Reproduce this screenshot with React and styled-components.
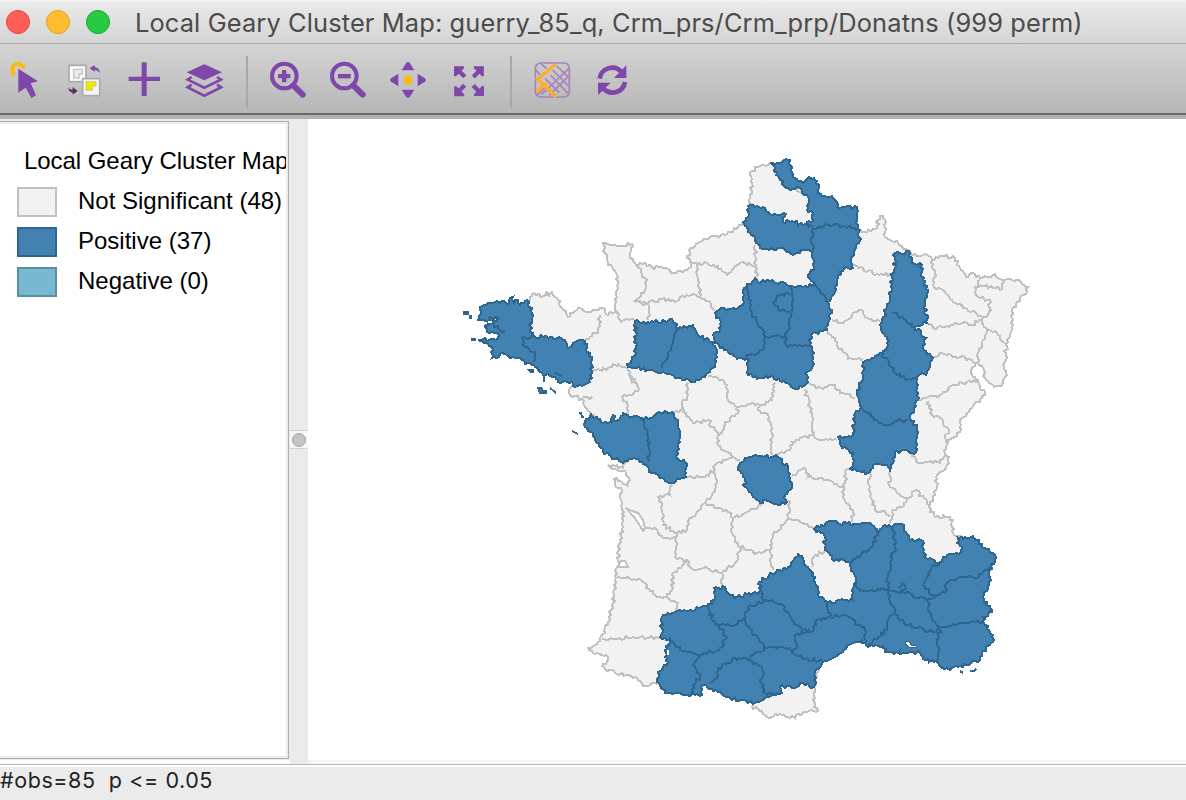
import React from "react";
import styled, { createGlobalStyle } from "styled-components";

const GlobalStyle = createGlobalStyle`
  * { box-sizing: border-box; }
  html, body { margin: 0; padding: 0; overflow: hidden; }
`;

const Window = styled.div`
  width: 1186px;
  height: 800px;
  display: flex;
  flex-direction: column;
  background: #ebebeb;
  overflow: hidden;
`;

const TitleBar = styled.header`
  height: 44px;
  flex: none;
  display: flex;
  align-items: center;
  padding-left: 6px;
  background: linear-gradient(#f4f4f4, #e9e9e9 3px, #d4d4d4);
  border-bottom: 1px solid #a9a9a9;
`;

const Lights = styled.div`
  display: flex;
  gap: 16px;
`;

const Light = styled.span`
  width: 24px;
  height: 24px;
  border-radius: 50%;
  background: ${(p) => p.$fill};
  border: 1px solid ${(p) => p.$edge};
`;

const Title = styled.h1`
  margin: 0 0 0 25px;
  padding-top: 2px;
  font: 400 25.4px/40px Inter, sans-serif;
  letter-spacing: 0.13px;
  color: #4b4b4b;
  white-space: pre;
`;

const Toolbar = styled.nav`
  height: 75px;
  flex: none;
  display: flex;
  align-items: flex-start;
  gap: 24px;
  padding: 18px 0 0 6px;
  background: linear-gradient(#d4d4d4, #b6b6b6 69px, #666966 69px, #666966 71px, #b1b1b1 71px);
`;

const IconButton = styled.button`
  width: 36px;
  height: 36px;
  flex: none;
  padding: 0;
  border: 0;
  background: none;
  svg { display: block; overflow: visible; }
`;

const Separator = styled.span`
  width: 2px;
  height: 52px;
  flex: none;
  margin: -6px -2px 0 0;
  background: #a8a8a8;
`;

const Body = styled.main`
  height: 645px;
  flex: none;
  display: flex;
`;

const LegendPane = styled.aside`
  width: 290px;
  flex: none;
  padding: 2px 1px 4px 0;
  background: linear-gradient(#ebebeb 641px, #fff 641px);
`;

const Legend = styled.section`
  height: 638px;
  padding: 19px 0 0 17px;
  background: #fff;
  border: solid #b0b0b0;
  border-width: 1px 1px 1px 0;
  box-shadow: inset -2px 2px #ececec, inset 0 -2px #ececec;
  overflow: hidden;
  font: 400 24px/40px "Liberation Sans", Arial, sans-serif;
  color: #000;
`;

const LegendTitle = styled.div`
  width: 262px;
  margin-left: 7px;
  height: 40px;
  overflow: hidden;
  white-space: nowrap;
  letter-spacing: -0.05px;
`;

const LegendRow = styled.div`
  display: flex;
  align-items: center;
  gap: 21px;
  height: 40px;
  white-space: nowrap;
`;

const Swatch = styled.span`
  width: 40px;
  height: 30px;
  margin-top: 1px;
  background: ${(p) => p.$fill};
  border: 2px solid ${(p) => p.$edge};
`;

const Sash = styled.div`
  width: 18px;
  flex: none;
  display: flex;
  align-items: center;
  padding-bottom: 4px;
  background: #ebebeb;
`;

const Grip = styled.div`
  width: 18px;
  height: 19px;
  display: grid;
  place-items: center;
  background: #f7f7f7;
  border: solid #d2d2d2;
  border-width: 1px 0;
  &::before {
    content: "";
    width: 12px;
    height: 12px;
    border-radius: 50%;
    background: #c4c4c4;
    border: 1px solid #a2a2a2;
  }
`;

const MapPane = styled.section`
  flex: 1;
  background: #fff;
  border-bottom: 4px solid #f4f4f4;
  overflow: hidden;
  svg { display: block; }
`;

const StatusBar = styled.footer`
  flex: 1;
  background: #ebebeb;
  border-top: 1px solid #b5b5b5;
  box-shadow: inset 0 2px #fff;
  font: 400 21.5px/30px Inter, sans-serif;
  letter-spacing: 0.57px;
  color: #222;
  white-space: pre;
`;

const PURPLE = "#7f47a9";
const YELLOW = "#fbb917";

const Icon = ({ label, children }) => (
  <IconButton aria-label={label}>
    <svg width="36" height="36" viewBox="0 0 108 108" fill={PURPLE}>{children}</svg>
  </IconButton>
);

const Lens = () => (
  <g fill="none" stroke={PURPLE}>
    <circle cx="43" cy="42" r="37" strokeWidth="12" />
    <path d="M70 70L98 98" strokeWidth="18" strokeLinecap="round" />
  </g>
);

const SelectIcon = () => (
  <Icon label="Select">
    <path d="M27 39A18 18 0 1 1 54 20" fill="none" stroke={YELLOW} strokeWidth="12" />
    <path d="M37 20L96 58L74 64L90 100L76 108L59 77L37 92Z" />
  </Icon>
);
const InvertIcon = () => (
  <Icon label="Invert selection">
    <rect x="9" y="10" width="51" height="49" fill="#fafafa" stroke="#aaa" strokeWidth="5" />
    <path d="M23 22H49V36H39V48H23Z" fill="#ececec" stroke="#c2c2c2" strokeWidth="4" />
    <rect x="50" y="50" width="51" height="51" fill="#f5f5f5" stroke="#aaa" strokeWidth="5" />
    <path d="M60 59H90V72H79V85H60Z" fill="#f3e900" stroke="#bdb76b" strokeWidth="2" />
    <path d="M71 19L86 9V15Q101 18 102 33Q95 24 86 23V29Z" />
    <path d="M35 87L20 75V83Q9 84 6 76Q8 91 20 92V98Z" fill="#56305f" />
  </Icon>
);
const AddIcon = () => (
  <Icon label="Add layer">
    <path d="M47 1H62V44H102V57H62V102H47V57H8V44H47Z" />
  </Icon>
);
const LayersIcon = () => (
  <Icon label="Layers">
    <path d="M55 7L108 31L55 55L2 31Z" />
    <path d="M17 45L5 53L55 77L105 53L93 45M17 68L5 76L55 101L105 76L93 68" fill="none" stroke={PURPLE} strokeWidth="8" />
  </Icon>
);
const ZoomInIcon = () => (
  <Icon label="Zoom in">
    <Lens />
    <path d="M36 24H49V36H61V49H49V61H36V49H24V36H36Z" />
  </Icon>
);
const ZoomOutIcon = () => (
  <Icon label="Zoom out">
    <Lens />
    <rect x="24" y="36" width="38" height="13" />
  </Icon>
);
const PanIcon = () => (
  <Icon label="Pan">
    <circle cx="54" cy="54" r="13" fill="#fbbc05" />
    {[0, 90, 180, 270].map((a) => (
      <path key={a} d="M50 1H58L73 25H35Z" transform={`rotate(${a} 54 54)`} />
    ))}
  </Icon>
);
const ExtentIcon = () => (
  <Icon label="Full extent">
    {[0, 90, 180, 270].map((a) => (
      <path key={a} d="M12 13H42V19L35 26L49 40L40 49L26 35L18 43H12Z" transform={`rotate(${a} 57 57.5)`} />
    ))}
  </Icon>
);
const BasemapIcon = () => (
  <Icon label="Base map">
    <g fill="none" stroke="#a682bd" strokeWidth="5">
      <rect x="4" y="3" width="102" height="102" rx="16" />
      <path d="M20 4L38 20M56 24L104 72M68 12L104 46M104 20L62 60L22 98M104 42L46 100M50 40L102 94M34 50L76 92M4 22L18 38M10 98L36 74" />
    </g>
    <path d="M66 6L10 52L66 104M8 90L38 62" fill="none" stroke="#fdae2c" strokeWidth="10" />
  </Icon>
);
const RefreshIcon = () => (
  <Icon label="Refresh">
    <path d="M17 50A38 38 0 0 1 82 29M93 60A38 38 0 0 1 28 80" fill="none" stroke={PURPLE} strokeWidth="14" />
    <path d="M97 10V48H60ZM12 99V62H50Z" />
  </Icon>
);

// Coastline and land border, in window coordinates.
const LAND =
  "770,163 780,172 800,192 815,185 825,205 850,215 855,232 860,230 867,232 877,228 878,220 883,216 885,220 885,237 892,241 898,243 906,249 912,255 917,256 925,254 932,259 942,256 955,258 960,268 966,277 973,273 980,278 987,277 995,274 1000,279 1017,280 1028,287 1023,295 1012,309 1012,327 1007,340 1006,353 1004,367 1007,375 1003,383 994,387 985,378 983,368 975,363 973,367 973,377 978,380 980,388 985,392 982,398 962,418 961,430 948,443 945,453 949,457 947,465 937,475 936,490 929,507 935,517 942,518 943,514 953,520 953,533 958,536 975,545 985,560 980,580 983,608 985,640 970,658 950,658 920,648 870,636 840,648 818,667 814,687 814,707 818,711 807,712 790,718 780,714 767,717 762,711 752,707 752,700 740,692 700,682 672,686 660,682 648,686 643,686 635,677 617,674 610,670 605,669 602,666 607,662 606,655 595,654 588,648 597,644 605,633 609,617 613,603 614,590 616,578 617,567 620,540 622,525 624,512 622,504 620,498 622,490 615,485 614,479 622,482 628,487 629,478 625,471 617,470 608,465 623,468 625,463 632,455 605,440 600,422 590,412 583,403 582,399 570,395 570,388 578,385 580,370 545,350 510,340 500,320 520,308 529,302 530,297 532,294 543,296 546,292 549,297 552,291 555,297 557,298 562,308 568,317 578,308 588,312 593,310 603,308 606,314 617,312 615,307 617,297 618,288 616,273 608,262 605,253 603,243 617,246 632,244 630,255 635,263 638,268 640,263 652,267 663,268 674,273 685,270 693,263 687,258 691,248 710,237 727,234 738,227 743,222 755,215 749,200 752,193 750,172 760,166 770,163";

const LAND_BORDERS = [
  "693,263 697,265 698,278 700,297 710,302 714,311",
  "697,265 705,262 718,266 727,275 738,265 745,263 755,267",
  "755,245 756,267 757,277",
  "635,302 648,303 662,299 677,301 687,295 700,297",
  "852,265 863,268 875,275 890,274",
  "832,320 843,323 855,312 863,311 867,318 880,321",
  "932,260 935,273 933,285 948,295 953,302 965,308 983,317",
  "980,280 975,292 980,298 990,300 989,312 983,317 984,327 987,329 997,333 1005,343",
  "980,285 993,288 1002,289 1004,282",
  "927,323 933,328 947,326 962,323 972,325 983,318",
  "987,330 983,340 978,353 977,363",
  "933,357 942,353 953,357 965,357 975,363",
  "919,400 940,395 953,385 967,382 978,380",
  "928,401 932,415 940,418 949,430 945,438 948,443",
  "912,453 918,463 928,462 940,463 946,455",
  "890,472 889,485 897,493 908,498 916,490 929,505",
  "908,498 902,507 892,512 890,523",
  "870,473 868,483 872,500 875,510 885,511 890,516",
  "850,468 846,470 845,483 843,497 853,512 852,522",
  "792,477 800,470 805,468 808,477 833,482 843,487",
  "827,332 835,338 837,345 845,353 848,359 863,359",
  "808,383 823,389 832,385 843,393 855,398",
  "805,390 810,407 813,420 812,435 817,439 837,440",
  "688,383 687,397 682,405 683,412 693,423 708,420 718,436 718,445 732,457",
  "682,408 673,414",
  "708,376 718,378 727,385 728,400 737,407 738,413 725,422 722,433 718,437",
  "737,407 750,404 760,405 772,400 775,383",
  "760,404 758,410 768,415 772,433 770,440 773,455",
  "777,456 780,453 790,450 792,442 812,435",
  "686,478 702,477 713,472 715,465 730,458 740,460",
  "713,472 717,483 713,493 705,503 688,522 687,530 677,533 663,525 662,510 658,497 670,495 672,485",
  "705,503 717,508 728,512 733,518 747,512 762,505",
  "733,518 732,533 740,547 757,553 770,550 773,535 785,523 788,517 789,500",
  "770,550 773,570",
  "740,547 735,563 722,573 722,587",
  "722,573 703,568 692,569 687,560 675,557 677,533",
  "687,562 673,573 672,590 667,597 678,603 676,612",
  "643,525 657,530 663,538 677,538",
  "617,577 625,578 643,582 655,595 667,597",
  "602,639 617,639 633,637 647,638 660,637",
  "812,567 815,555 825,551",
  "785,522 788,518 800,522 813,529",
  "600,315 598,333 590,337 585,341",
  "617,313 621,323 627,319 635,320",
  "637,266 645,278 645,290 635,301 648,304 648,320",
  "592,372 608,368 618,364 627,368 631,380 638,387 638,391 622,397 628,406 628,413",
  "630,377 635,379 635,383 631,383",
  "582,398 592,397",
];

const INLETS = [
  "626,508 632,511 638,513 643,520 645,528 643,531 639,524 634,517",
  "618,567 621,561 625,561 628,567",
];

const POSITIVE = [
  "770,163 777,163 784,160 790,160 791,170 793,177 798,181 803,183 807,179 814,178 817,181 818,190 822,196 832,196 837,202 837,207 845,207 857,207 857,213 857,220 858,227 860,230 859,243 855,250 852,257 853,268 846,267 840,272 837,282 835,292 828,302 832,313 829,321 827,330 811,335 810,345 814,353 812,368 805,373 808,382 802,387 793,388 788,383 780,381 773,377 757,379 747,372 747,358 737,359 727,350 715,343 713,335 720,330 721,322 716,315 717,311 740,306 744,302 744,288 752,282 755,278 758,282 770,281 785,283 792,286 803,287 815,284 808,277 814,267 813,250 803,250 793,255 785,250 760,248 755,238 748,232 743,222 748,217 748,206 757,206 765,208 770,214 780,215 786,214 783,222 792,221 803,225 811,226 807,222 813,221 813,213 808,212 808,197 802,193 800,188 793,189 784,186 780,180 776,175 775,168 770,163",
  "529,302 527,300 520,305 518,300 514,303 513,297 509,303 495,302 480,307 478,320 488,322 498,318 491,323 485,327 487,332 497,333 498,338 478,340 488,344 493,350 492,358 505,354 515,358 528,363 535,367 543,375 555,377 558,382 572,382 573,386 590,382 592,360 587,347 583,340 575,342 568,348 565,340 550,337 532,336 530,330 532,313 529,302",
  "635,321 650,323 672,319 678,329 693,325 698,335 713,342 717,350 716,362 710,372 695,382 682,380 663,372 650,370 628,367 632,357 636,353 635,321",
  "585,422 591,414 603,423 612,422 613,415 616,421 620,418 623,413 632,417 653,417 657,413 672,412 678,420 679,440 677,458 685,462 686,477 672,483 652,473 642,462 632,459 623,463 603,452 595,438 585,427 585,422",
  "742,462 747,458 762,456 778,457 788,467 792,483 790,490 785,495 787,502 778,505 763,500 760,503 752,495 745,487 745,478 738,470 742,462",
  "895,253 902,254 909,251 912,263 920,263 923,280 928,290 925,303 927,323 915,327 926,338 923,348 933,358 927,373 917,377 917,387 918,400 910,418 917,428 916,452 910,453 903,450 895,452 890,472 887,465 873,465 868,473 850,469 853,463 853,453 842,448 838,437 853,435 855,413 862,408 857,395 863,377 863,362 882,353 888,345 887,337 880,325 885,313 889,303 892,277 895,268 895,253",
  "813,529 832,521 840,524 867,523 872,525 877,532 885,525 893,526 902,524 910,540 923,541 924,557 938,563 947,555 963,552 957,543 957,536 963,539 973,536 982,547 993,553 995,562 989,570 991,580 983,597 992,612 983,617 984,623 993,635 993,642 982,653 980,660 960,666 945,669 938,663 923,659 920,653 908,653 898,653 885,652 883,646 866,645 862,640 855,642 835,657 823,662 815,673 814,687 803,683 797,687 780,687 782,693 755,703 739,701 718,692 703,685 702,695 685,695 668,693 657,682 658,672 668,662 665,657 669,640 660,637 663,615 675,612 708,607 715,598 714,588 725,587 727,592 737,597 747,594 762,592 759,582 777,570 787,569 798,553 808,567 813,573 816,585 819,597 835,603 840,600 853,600 853,588 856,578 848,562 832,559 825,547 823,533 813,529",
];

const POSITIVE_BORDERS = [
  "532,337 522,338 525,347 535,352 533,362",
  "484,327 492,323 500,330 505,331",
  "488,318 497,317",
  "554,374 562,376",
  "678,329 673,343 662,368",
  "640,417 648,432 650,452 648,462",
  "892,312 915,327",
  "880,353 888,360 895,373 907,380 917,377",
  "862,410 873,417 883,425 897,421 908,420",
  "813,227 811,240 813,250",
  "813,228 833,225 845,227 858,229",
  "815,285 828,302",
  "792,286 792,310 788,330 785,337",
  "790,295 782,294 773,302 778,309 790,312",
  "748,288 750,310 763,330 765,338 785,336 788,347 810,345",
  "765,338 763,350 745,357",
  "878,532 872,547 850,563",
  "892,526 895,547 890,563 887,590 890,603 895,612 888,620 887,630 868,645",
  "856,583 860,591 887,589 903,592 927,600 935,597 923,585 932,567 940,563",
  "935,597 945,592 947,583 958,578 967,577 977,578 993,563",
  "898,588 902,583 906,588 900,591",
  "895,615 908,625 933,632 940,627",
  "927,600 932,618 940,627 953,624 962,623 973,621 983,622",
  "940,627 938,647 938,662",
  "827,603 830,617 845,615 865,630 866,643",
  "828,617 815,622 813,631 795,635 797,645 792,653 805,659 823,661",
  "762,593 763,602 772,600 783,605 792,620 802,630 810,630",
  "763,602 750,605 745,618 752,633 767,648 790,648 793,653",
  "745,618 735,625 715,624 708,608",
  "715,624 727,637 719,650 700,655 680,650 670,637",
  "700,655 693,665 700,677 693,685 693,695",
  "767,648 753,655 750,660 735,658 730,663 718,668 718,675 710,683",
  "750,660 762,667 762,687 767,695 780,693",
];

const ISLANDS =
  "M464 312h4v2h-4zM470 316h1v2h-1zM472 339h3v1h-3zM529 370h4v2h-2zM538 388h3l2 3h3v2h-6zM550 388l5 4v-1M544 376v6M579 413h2l1 4h2M572 431l6 3M960 671l3 2M970 671h4l2-2M989 611h4";

const hash = (n) => {
  const s = Math.sin(n * 12.9898) * 43758.5453;
  return s - Math.floor(s);
};

// Turns a sparse outline into a stepped, finely irregular one.
const roughen = (points, closed) => {
  const pts = points.split(" ").map((p) => p.split(",").map(Number));
  const out = [];
  pts.slice(0, -1).forEach(([x, y], i) => {
    const [nx, ny] = pts[i + 1];
    const len = Math.hypot(nx - x, ny - y) || 1;
    const steps = Math.max(1, Math.round(len / 2.3));
    for (let k = 0; k < steps; k++) {
      const t = k / steps;
      const px = x + (nx - x) * t;
      const py = y + (ny - y) * t;
      const d = k === 0 ? 0 : (hash(px * 1.7 + py * 3.1) - 0.5) * 3.4;
      out.push([Math.round(px - ((ny - y) / len) * d), Math.round(py + ((nx - x) / len) * d)]);
    }
  });
  out.push(pts[pts.length - 1]);
  return "M" + out.map((p) => p.join(" ")).join("L") + (closed ? "Z" : "");
};

const landPath = roughen(LAND, true);
const landLines = LAND_BORDERS.map((l) => roughen(l)).join("");
const positivePath = POSITIVE.map((l) => roughen(l, true)).join("");
const positiveLines = POSITIVE_BORDERS.map((l) => roughen(l)).join("");

const ClusterMap = () => (
  <svg width="878" height="641" viewBox="308 119 878 641" strokeWidth="2" shapeRendering="crispEdges">
    <path d={landPath} fill="#f2f2f2" stroke="#c0c0c0" />
    <path d={landLines} fill="none" stroke="#c0c0c0" />
    {INLETS.map((p) => <polygon key={p} points={p} fill="#fff" stroke="#c0c0c0" />)}
    <path d={positivePath} fill="#4182b3" stroke="#2e668e" />
    <path d={positiveLines} fill="none" stroke="#2e668e" />
    <path d={ISLANDS} fill="#4182b3" stroke="#2e668e" />
    <path d="M905 641h4l2 4h5v2h-7l-4-3zM902 648l-3 4" fill="#fff" stroke="#2e668e" strokeWidth="1" />
    <path d="M488 322h4M668 650v5" stroke="#fff" fill="none" />
  </svg>
);

const CLASSES = [
  { label: "Not Significant (48)", fill: "#f2f2f2", edge: "#c0c0c0" },
  { label: "Positive (37)", fill: "#4182b3", edge: "#2e668e" },
  { label: "Negative (0)", fill: "#78b8d1", edge: "#5790a5" },
];

export default function App() {
  return (
    <Window>
      <GlobalStyle />
      <TitleBar>
        <Lights>
          <Light $fill="#ff5f57" $edge="#e2463f" />
          <Light $fill="#ffbd2e" $edge="#e1a116" />
          <Light $fill="#28ca42" $edge="#12ac28" />
        </Lights>
        <Title>Local Geary Cluster Map: guerry_85_q, Crm_prs/Crm_prp/Donatns (999 perm)</Title>
      </TitleBar>
      <Toolbar>
        <SelectIcon />
        <InvertIcon />
        <AddIcon />
        <LayersIcon />
        <Separator />
        <ZoomInIcon />
        <ZoomOutIcon />
        <PanIcon />
        <ExtentIcon />
        <Separator />
        <BasemapIcon />
        <RefreshIcon />
      </Toolbar>
      <Body>
        <LegendPane>
          <Legend>
            <LegendTitle>Local Geary Cluster Map</LegendTitle>
            {CLASSES.map((c) => (
              <LegendRow key={c.label}>
                <Swatch $fill={c.fill} $edge={c.edge} />
                {c.label}
              </LegendRow>
            ))}
          </Legend>
        </LegendPane>
        <Sash><Grip /></Sash>
        <MapPane><ClusterMap /></MapPane>
      </Body>
      <StatusBar>#obs=85  p &lt;= 0.05</StatusBar>
    </Window>
  );
}
